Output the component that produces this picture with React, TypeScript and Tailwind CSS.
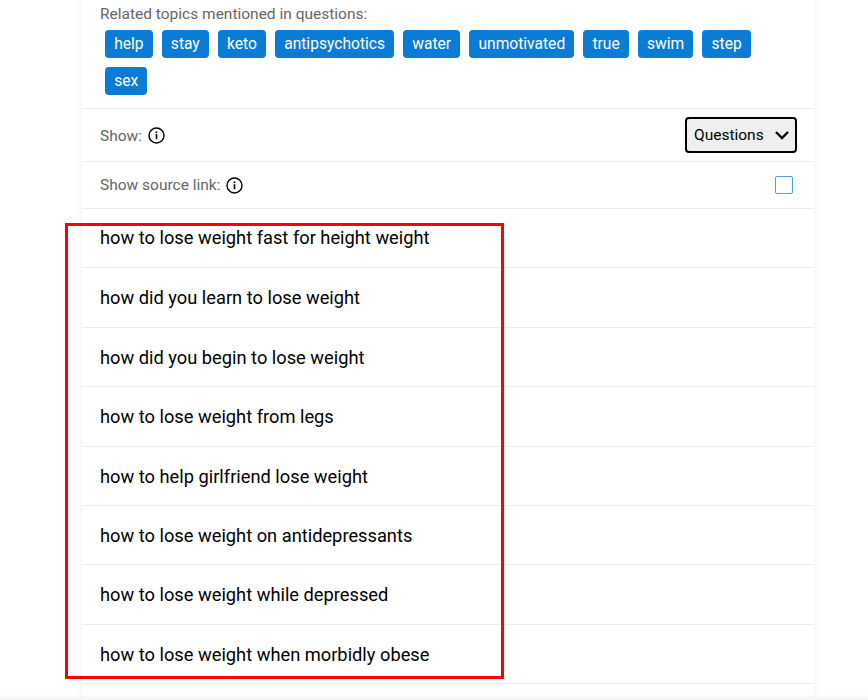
import React from "react";

const tags = ["help", "stay", "keto", "antipsychotics", "water", "unmotivated", "true", "swim", "step", "sex"];
const questions = [
  "how to lose weight fast for height weight",
  "how did you learn to lose weight",
  "how did you begin to lose weight",
  "how to lose weight from legs",
  "how to help girlfriend lose weight",
  "how to lose weight on antidepressants",
  "how to lose weight while depressed",
  "how to lose weight when morbidly obese",
];

function Info() {
  return (
    <svg width="17" height="17" viewBox="0 0 17 17" fill="none" className="shrink-0">
      <circle cx="8.5" cy="8.5" r="7.5" stroke="#000" strokeWidth="1.4" />
      <rect x="7.7" y="7.2" width="1.6" height="5" fill="#000" />
      <rect x="7.7" y="4.4" width="1.6" height="1.7" fill="#000" />
    </svg>
  );
}

export default function App() {
  return (
    <div className="relative h-[700px] w-[868px] overflow-hidden bg-white font-['Roboto',sans-serif]">
      <div className="ml-[82px] w-[732px] shadow-[0_0_6px_rgba(0,0,0,0.08)]">
        <div className="h-[109px] border-b border-[#ececec] pl-[18px] pr-[30px] pt-[5px]">
          <div className="h-[18px] text-[15.5px] leading-[18px] text-[#666]">Related topics mentioned in questions:</div>
          <div className="mt-[7px] flex flex-wrap gap-x-[9px] gap-y-[9px] pl-[5px]">
            {tags.map((t) => (
              <span key={t} className="flex h-[28px] items-center rounded-[4px] bg-[#0a7cd6] px-[9.15px] pt-[1px] text-[15.6px] text-white">
                {t}
              </span>
            ))}
          </div>
        </div>
        <div className="flex h-[53px] items-center justify-between border-b border-[#ececec] pl-[18px] pr-[17px]">
          <div className="flex items-center gap-[6px] text-[15.5px] leading-[20px] text-[#666]">
            <span className="pt-[1px]">Show:</span> <Info />
          </div>
          <div className="flex h-[36px] w-[112px] items-center justify-between rounded-[4px] border-2 border-black bg-[#efefef] pl-[7px] pr-[5px] text-[15.5px] text-black">
            <span className="pt-[1px]">Questions</span>
            <svg width="16" height="12" viewBox="0 0 16 12" fill="none">
              <path d="M2 3l6 6 6-6" stroke="#000" strokeWidth="2.4" />
            </svg>
          </div>
        </div>
        <div className="flex h-[47px] items-center justify-between border-b border-[#ececec] pl-[18px] pr-[21px]">
          <div className="flex items-center gap-[6px] text-[15.5px] leading-[20px] text-[#666]">
            <span>Show source link:</span> <Info />
          </div>
          <div className="h-[18px] w-[18px] rounded-[2px] border border-[#4c9fe3] bg-white" />
        </div>
        {questions.map((q, i) => (
          <div
            key={q}
            className={`flex border-b border-[#ececec] pl-[18px] text-[18.27px] text-black ${i === 0 ? "h-[59.1px] items-start pt-[18px]" : "h-[59.48px] items-center pt-[1px]"}`}
          >
            <span className={i === 0 ? "leading-[22px]" : ""}>{q}</span>
          </div>
        ))}
        <div className="h-[20px]" />
      </div>
      <div className="pointer-events-none absolute left-[65px] top-[223px] h-[456px] w-[439px] border-[3px] border-[#ff0000]" />
      <div className="pointer-events-none absolute bottom-0 left-0 h-[6px] w-full bg-gradient-to-b from-transparent to-[#f4f4f4]" />
    </div>
  );
}
